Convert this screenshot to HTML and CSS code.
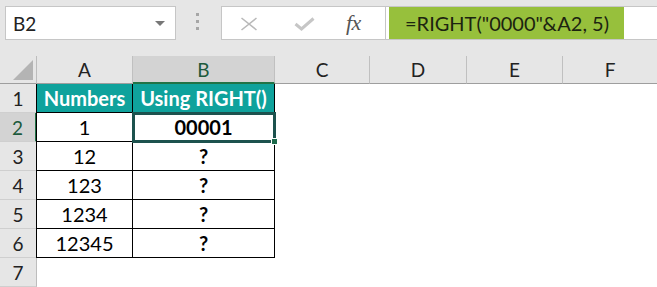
FILE: index.html
```html
<!DOCTYPE html>
<html>
<head>
<meta charset="utf-8">
<link rel="stylesheet" href="styles.css">
</head>
<body>
<div class="topbar">
  <div class="namebox">
    <span class="nb-text">B2</span>
    <span class="caret"></span>
  </div>
  <div class="dots"><i></i><i></i><i></i></div>
  <div class="fbox">
    <div class="ficons">
      <svg class="ic-x" width="18" height="14" viewBox="0 0 18 14"><path d="M1.5 1 L16.5 13 M16.5 1 L1.5 13" stroke="#b9b9b9" stroke-width="1.6" fill="none"/></svg>
      <svg class="ic-ok" width="21" height="14" viewBox="0 0 21 14"><path d="M1.5 7 L7.5 12 L19.5 1.5" stroke="#c6c6c6" stroke-width="3" fill="none"/></svg>
      <span class="fx">fx</span>
    </div>
    <div class="formula">=RIGHT("0000"&amp;A2, 5)</div>
  </div>
</div>
<div class="sheet">
  <div class="corner"><span class="tri"></span></div>
  <div class="ch">A</div>
  <div class="ch sel">B</div>
  <div class="ch">C</div>
  <div class="ch">D</div>
  <div class="ch">E</div>
  <div class="ch last">F</div>

  <div class="rh">1</div>
  <div class="c ca hd">Numbers</div>
  <div class="c cb hd">Using RIGHT()</div>
  <div class="e"></div><div class="e"></div><div class="e"></div><div class="e"></div>

  <div class="rh rsel">2</div>
  <div class="c ca">1</div>
  <div class="c cb b active">00001</div>
  <div class="e"></div><div class="e"></div><div class="e"></div><div class="e"></div>

  <div class="rh">3</div>
  <div class="c ca">12</div>
  <div class="c cb b">?</div>
  <div class="e"></div><div class="e"></div><div class="e"></div><div class="e"></div>

  <div class="rh">4</div>
  <div class="c ca">123</div>
  <div class="c cb b">?</div>
  <div class="e"></div><div class="e"></div><div class="e"></div><div class="e"></div>

  <div class="rh">5</div>
  <div class="c ca">1234</div>
  <div class="c cb b">?</div>
  <div class="e"></div><div class="e"></div><div class="e"></div><div class="e"></div>

  <div class="rh">6</div>
  <div class="c ca">12345</div>
  <div class="c cb b">?</div>
  <div class="e"></div><div class="e"></div><div class="e"></div><div class="e"></div>

  <div class="rh">7</div>
  <div class="e"></div><div class="e"></div>
  <div class="e"></div><div class="e"></div><div class="e"></div><div class="e"></div>
</div>
</body>
</html>
```
FILE: styles.css
```css
* { box-sizing: border-box; }
html, body { margin: 0; padding: 0; }
body {
  width: 657px;
  height: 287px;
  overflow: hidden;
  background: #fff;
  font-family: Lato, "Open Sans", sans-serif;
  color: #000;
}
.topbar {
  height: 56px;
  background: #e6e6e6;
  display: flex;
  align-items: flex-start;
  padding: 6px 0 0 5px;
}
.namebox {
  width: 171px;
  height: 34px;
  background: #fff;
  border: 1px solid #c6c6c6;
  display: flex;
  align-items: center;
  justify-content: space-between;
  padding: 0 10px 0 7px;
}
.nb-text { font-size: 19px; color: #222; }
.caret {
  width: 0; height: 0;
  border-left: 5px solid transparent;
  border-right: 5px solid transparent;
  border-top: 5px solid #777;
}
.dots {
  width: 3px;
  margin: 7px 22px 0 20px;
  display: flex;
  flex-direction: column;
  gap: 4px;
}
.dots i { display: block; width: 3px; height: 3px; background: #a6a6a6; }
.fbox {
  flex: 1;
  height: 34px;
  background: #fff;
  border: 1px solid #c6c6c6;
  border-right: none;
  display: flex;
}
.ficons {
  width: 164px;
  border-right: 1px solid #c6c6c6;
  display: flex;
  align-items: center;
  padding-left: 18px;
}
.ic-x { margin-top: 1px; }
.ic-ok { margin-left: 36px; margin-top: 2px; }
.fx {
  margin-left: 31px;
  font-family: "Liberation Serif", serif;
  font-style: italic;
  font-size: 22px;
  color: #555;
  letter-spacing: -0.5px;
}
.formula {
  margin-left: 3px;
  width: 235px;
  background: #97c03c;
  font-size: 20px;
  color: #1c2410;
  display: flex;
  align-items: center;
  padding-left: 16px;
  white-space: nowrap;
}
.sheet {
  display: grid;
  grid-template-columns: 37px 96px 142px 95px 97px 96px 94px;
  grid-template-rows: 28px repeat(7, 29px);
  font-size: 18px;
}
.corner {
  background: #e6e6e6;
  border-right: 1px solid #bdbdbd;
  border-bottom: 1px solid #9e9e9e;
  position: relative;
}
.tri {
  position: absolute;
  right: 3px;
  bottom: 3px;
  width: 0; height: 0;
  border-left: 20px solid transparent;
  border-bottom: 20px solid #b4b4b4;
}
.ch {
  background: #e6e6e6;
  border-right: 1px solid #c0c0c0;
  border-bottom: 1px solid #9e9e9e;
  display: flex;
  align-items: center;
  justify-content: center;
  color: #222;
  font-size: 19px;
}
.ch.last { border-right: none; }
.ch.sel {
  background: #d3d3d3;
  border-bottom: 2px solid #217346;
  color: #1d5a3c;
}
.rh {
  background: #e6e6e6;
  border-right: 1px solid #bdbdbd;
  border-bottom: 1px solid #cfcfcf;
  display: flex;
  align-items: center;
  justify-content: center;
  color: #222;
  font-size: 19px;
}
.rh.rsel {
  background: #d3d3d3;
  border-right: 2px solid #217346;
  color: #1d5a3c;
}
.c {
  border-right: 1px solid #000;
  border-bottom: 1px solid #000;
  display: flex;
  align-items: center;
  justify-content: center;
  white-space: nowrap;
  font-size: 20px;
}
.ca { box-shadow: -1px 0 0 #000; }
.hd {
  background: #0fa29c;
  color: #fff;
  font-weight: bold;
}
.b { font-weight: bold; }
.active { position: relative; }
.active::after {
  content: "";
  position: absolute;
  left: -1px; top: -1px; right: -2px; bottom: -2px;
  border: 3px solid #1d524e;
}
.active::before {
  content: "";
  position: absolute;
  right: -4px;
  bottom: -4px;
  width: 5px; height: 5px;
  background: #1d6b4c;
  border: 1px solid #fff;
  z-index: 2;
}
.e { }
```
